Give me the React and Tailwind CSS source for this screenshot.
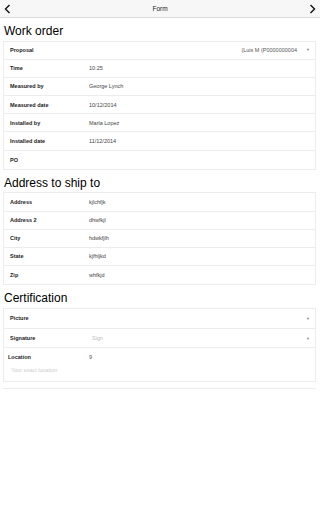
import React from "react";

const workOrder = [
  { label: "Proposal", value: "(Luis M (P0000000004", select: true },
  { label: "Time", value: "10:25" },
  { label: "Measured by", value: "George Lynch" },
  { label: "Measured date", value: "10/12/2014" },
  { label: "Installed by", value: "Marla Lopez" },
  { label: "Installed date", value: "11/12/2014" },
  { label: "PO", value: "" },
];

const address = [
  { label: "Address", value: "kjlchfjk" },
  { label: "Address 2", value: "dhwfkjl" },
  { label: "City", value: "hdwkfjlh" },
  { label: "State", value: "kjfhljkd" },
  { label: "Zip", value: "whfkjd" },
];

const Caret = () => (
  <span className="text-[4px] leading-none text-[#888]">▼</span>
);

const SectionTitle = ({ children }) => (
  <div className="h-[22.5px] flex items-center pt-[3px] pl-[4px] text-[12px] text-black">
    {children}
  </div>
);

const Row = ({ row }) => (
  <div className="h-[18.2px] flex items-center border-b border-[#ececec] last:border-b-0">
    <div className="w-[85px] pl-[6px] font-semibold text-[#222]">{row.label}</div>
    {row.select ? (
      <div className="flex-1 flex items-center justify-end pr-[5px] gap-[9px] text-[#555]">
        <span>{row.value}</span>
        <Caret />
      </div>
    ) : (
      <div className="flex-1 text-[#444]">{row.value}</div>
    )}
  </div>
);

const ChevronLeft = () => (
  <svg width="7" height="10" viewBox="0 0 7 10" className="block">
    <path d="M5.5 1 L1.5 5 L5.5 9" fill="none" stroke="#111" strokeWidth="1.4" />
  </svg>
);

const ChevronRight = () => (
  <svg width="7" height="10" viewBox="0 0 7 10" className="block">
    <path d="M1.5 1 L5.5 5 L1.5 9" fill="none" stroke="#111" strokeWidth="1.4" />
  </svg>
);

export default function App() {
  return (
    <div
      className="w-[320px] h-[512px] bg-white text-[5.5px]"
      style={{ fontFamily: '"Liberation Sans", Arial, sans-serif' }}
    >
      <div className="h-[18px] bg-[#f7f7f7] border-b border-[#dcdcdc] flex items-center justify-between px-[4px]">
        <ChevronLeft />
        <span className="text-[6.5px] text-[#222]">Form</span>
        <ChevronRight />
      </div>

      <div className="w-[316px]">
        <SectionTitle>Work order</SectionTitle>
        <div className="ml-[3px] border border-[#ececec]">
          {workOrder.map((r) => (
            <Row key={r.label} row={r} />
          ))}
        </div>

        <SectionTitle>Address to ship to</SectionTitle>
        <div className="ml-[3px] border border-[#ececec]">
          {address.map((r) => (
            <Row key={r.label} row={r} />
          ))}
        </div>

        <SectionTitle>Certification</SectionTitle>
        <div className="ml-[3px] border border-[#ececec]">
          <div className="h-[20px] flex items-center border-b border-[#ececec]">
            <div className="flex-1 pl-[6px] font-semibold text-[#222]">Picture</div>
            <div className="pr-[5px]">
              <Caret />
            </div>
          </div>
          <div className="h-[19px] flex items-center border-b border-[#ececec]">
            <div className="w-[88px] pl-[6px] font-semibold text-[#222]">Signature</div>
            <div className="flex-1 text-[#bbb]">Sign</div>
            <div className="pr-[5px]">
              <Caret />
            </div>
          </div>
          <div className="h-[33px] pt-[5px] pl-[4px]">
            <div className="flex">
              <div className="w-[81px] font-semibold text-[#222]">Location</div>
              <div className="text-[#555]">9</div>
            </div>
            <div className="mt-[5px] pl-[3px] text-[#ccc]">Your exact location</div>
          </div>
        </div>
        <div className="ml-[3px] h-[7px] border-b border-[#ececec]"></div>
      </div>
    </div>
  );
}
